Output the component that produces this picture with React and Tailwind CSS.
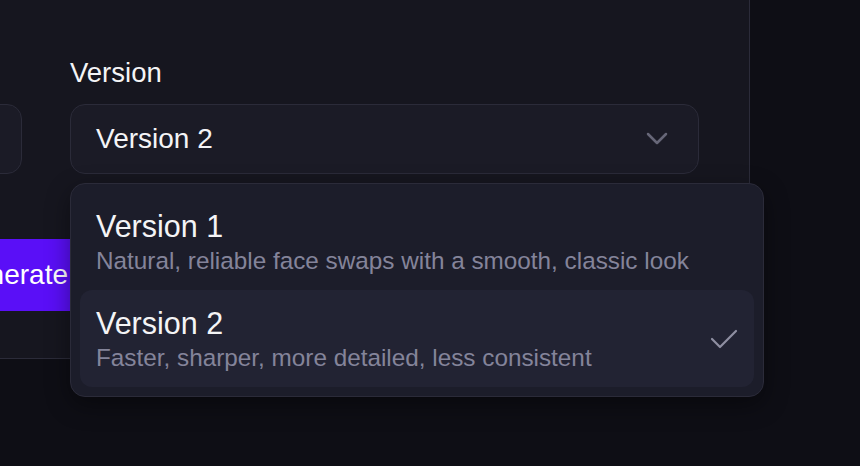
import React, { useState } from 'react';

const OPTIONS = [
  { id: 'v1', name: 'Version 1', desc: 'Natural, reliable face swaps with a smooth, classic look' },
  { id: 'v2', name: 'Version 2', desc: 'Faster, sharper, more detailed, less consistent' },
];

const Chevron = () => (
  <svg width="22" height="14" viewBox="0 0 22 14" fill="none">
    <polyline points="2,2 11,11 20,2" stroke="#676778" strokeWidth="2.5" strokeLinecap="round" strokeLinejoin="round" />
  </svg>
);

const Check = () => (
  <svg width="28" height="20" viewBox="0 0 28 20" fill="none">
    <polyline points="2,10 10,18 26,2" stroke="#8f8fa2" strokeWidth="2.2" strokeLinecap="round" strokeLinejoin="round" />
  </svg>
);

const App = () => {
  const [selected, setSelected] = useState('v2');
  const current = OPTIONS.find(o => o.id === selected);

  return (
    <div className="w-[860px] h-[466px] overflow-hidden bg-[#0e0e15] font-['Liberation_Sans',Arial,sans-serif]">
      <div className="w-[750px] h-[359px] bg-[#16161f] border-r border-b border-[#2b2b39] pt-[57px] pl-[70px] pr-[50px] flex flex-col">
        <div className="flex">
          {/* left column, mostly off screen */}
          <div className="w-[300px] ml-[-348px] mr-[48px] flex flex-col shrink-0">
            <div className="h-[32px]" />
            <div className="mt-[15px] h-[70px] rounded-[15px] border border-[#2b2b39] bg-[#1b1b26]" />
          </div>

          <div className="flex-1 flex flex-col">
            <label className="h-[32px] text-[27.5px] leading-[32px] text-[#f4f4f6]">Version</label>
            <div className="relative mt-[15px]">
              <button className="w-full h-[70px] rounded-[15px] border border-[#2b2b39] bg-[#1b1b26] pl-[25px] pr-[30px] flex items-center justify-between">
                <span className="text-[28px] leading-[34px] text-[#f4f4f6]">{current.name}</span>
                <Chevron />
              </button>

              <div className="absolute left-0 top-[79px] w-[694px] z-10 rounded-[15px] border border-[#2b2b39] bg-[#1c1d2a] p-[9px] shadow-[0_8px_24px_rgba(0,0,0,0.4)]">
                {OPTIONS.map(opt => (
                  <div
                    key={opt.id}
                    onClick={() => setSelected(opt.id)}
                    className={`flex items-center justify-between rounded-[12px] pl-[16px] pr-[16px] pt-[15px] pb-[15px] ${
                      opt.id === selected ? 'bg-[#222333]' : ''
                    }`}
                  >
                    <div className="flex flex-col">
                      <span className="text-[30.5px] leading-[36px] text-[#f4f4f6]">{opt.name}</span>
                      <span className="mt-[3px] text-[24.3px] leading-[28px] text-[#84849a]">{opt.desc}</span>
                    </div>
                    {opt.id === selected && <Check />}
                  </div>
                ))}
              </div>
            </div>
          </div>
        </div>

        <button className="mt-[65px] h-[72px] w-[300px] ml-[-300px] bg-[#5a0ff7] flex items-center justify-end pr-[2px] text-[28px] text-white">
          Generate
        </button>
      </div>
    </div>
  );
};

export default App;
